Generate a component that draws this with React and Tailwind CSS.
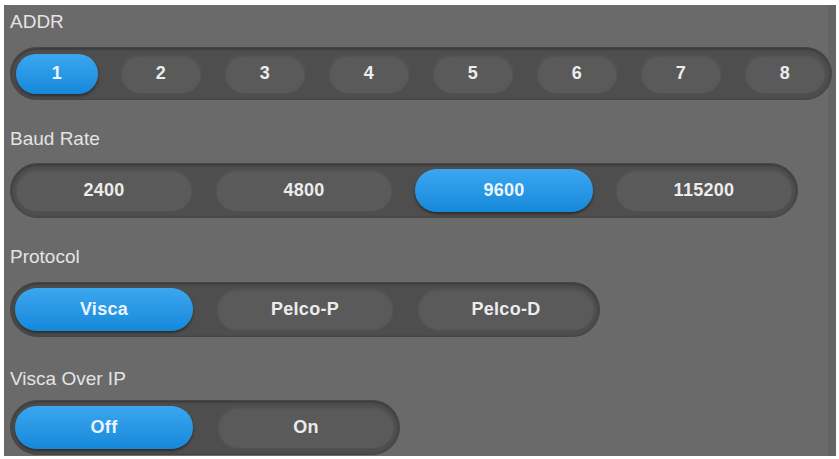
import React, { useState } from 'react';

const font = { fontFamily: '"Liberation Sans", Arial, sans-serif' };

function Segmented({ options, value, onChange, boxClass, pillClass }) {
    return (
        <div className={`flex items-center justify-between rounded-full bg-[#4e4e4e] border border-[#464646] shadow-[inset_0_1px_3px_rgba(0,0,0,0.35)] ${boxClass}`}>
            {options.map(opt => {
                const active = opt === value;
                return (
                    <button
                        key={opt}
                        onClick={() => onChange(opt)}
                        className={`flex items-center justify-center rounded-full text-[18px] font-bold tracking-[0.3px] ${pillClass} ${active
                            ? 'bg-gradient-to-b from-[#3aa7ef] to-[#1488da] text-[#eaf5ff] shadow-[0_2px_3px_rgba(0,0,0,0.45)]'
                            : 'bg-[#5a5a5a] text-[#ececec] border border-[#515151] shadow-[inset_0_1px_2px_rgba(0,0,0,0.15)]'}`}
                    >
                        {opt}
                    </button>
                );
            })}
        </div>
    );
}

function Label({ children, className }) {
    return <div className={`text-[19px] leading-[22px] text-[#e4e4e4] ${className}`}>{children}</div>;
}

export default function App() {
    const [addr, setAddr] = useState('1');
    const [baud, setBaud] = useState('9600');
    const [protocol, setProtocol] = useState('Visca');
    const [overIp, setOverIp] = useState('Off');

    return (
        <div style={font} className="w-[839px] h-[459px] bg-white pt-[5px] pl-[4px] pr-[3px] pb-[3px]">
            <div className="h-full bg-[#6a6a6a] border-r-[8px] border-[#646464] pt-[6px] pl-[6px] flex flex-col">
                <Label>ADDR</Label>
                <Segmented
                    options={['1', '2', '3', '4', '5', '6', '7', '8']}
                    value={addr}
                    onChange={setAddr}
                    boxClass="mt-[14px] w-[822px] h-[53px] px-[5px]"
                    pillClass="w-[82px] h-[40px]"
                />

                <Label className="mt-[28px]">Baud Rate</Label>
                <Segmented
                    options={['2400', '4800', '9600', '115200']}
                    value={baud}
                    onChange={setBaud}
                    boxClass="mt-[13px] w-[788px] h-[55px] px-[4px]"
                    pillClass="w-[178px] h-[43px]"
                />

                <Label className="mt-[28px]">Protocol</Label>
                <Segmented
                    options={['Visca', 'Pelco-P', 'Pelco-D']}
                    value={protocol}
                    onChange={setProtocol}
                    boxClass="mt-[14px] w-[590px] h-[55px] px-[4px]"
                    pillClass="w-[178px] h-[43px]"
                />

                <Label className="mt-[31px]">Visca Over IP</Label>
                <Segmented
                    options={['Off', 'On']}
                    value={overIp}
                    onChange={setOverIp}
                    boxClass="mt-[10px] w-[390px] h-[55px] px-[4px]"
                    pillClass="w-[178px] h-[43px]"
                />
            </div>
        </div>
    );
}
